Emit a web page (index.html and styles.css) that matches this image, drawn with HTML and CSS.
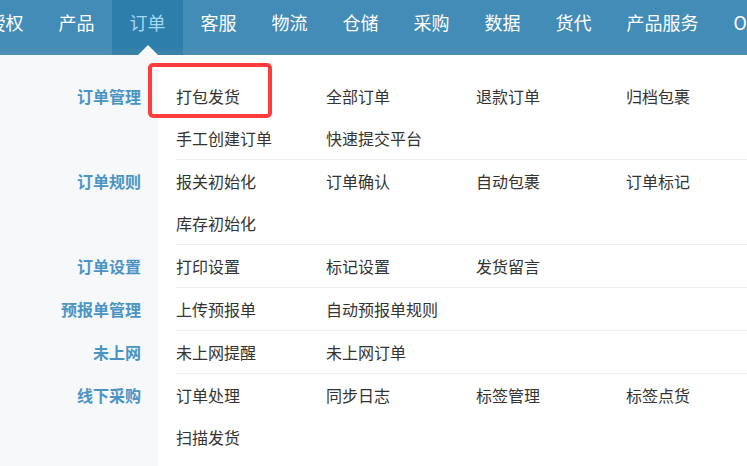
FILE: index.html
```html
<!DOCTYPE html>
<html lang="zh-CN">
<head>
    <meta charset="UTF-8">
    <meta name="viewport" content="width=device-width, initial-scale=1.0">
    <link rel="stylesheet" href="styles.css">
</head>
<body>
    <div class="topnav">
        <ul class="nav-list">
            <li class="nav-item">授权</li>
            <li class="nav-item">产品</li>
            <li class="nav-item active">订单</li>
            <li class="nav-item">客服</li>
            <li class="nav-item">物流</li>
            <li class="nav-item">仓储</li>
            <li class="nav-item">采购</li>
            <li class="nav-item">数据</li>
            <li class="nav-item">货代</li>
            <li class="nav-item">产品服务</li>
            <li class="nav-item">OA</li>
        </ul>
    </div>

    <div class="dropdown">
        <div class="group">
            <div class="group-title">订单管理</div>
            <div class="links">
                <a class="link">打包发货</a>
                <a class="link">全部订单</a>
                <a class="link">退款订单</a>
                <a class="link">归档包裹</a>
                <a class="link">手工创建订单</a>
                <a class="link">快速提交平台</a>
            </div>
        </div>
        <div class="group">
            <div class="group-title">订单规则</div>
            <div class="links">
                <a class="link">报关初始化</a>
                <a class="link">订单确认</a>
                <a class="link">自动包裹</a>
                <a class="link">订单标记</a>
                <a class="link">库存初始化</a>
            </div>
        </div>
        <div class="group">
            <div class="group-title">订单设置</div>
            <div class="links">
                <a class="link">打印设置</a>
                <a class="link">标记设置</a>
                <a class="link">发货留言</a>
            </div>
        </div>
        <div class="group">
            <div class="group-title">预报单管理</div>
            <div class="links">
                <a class="link">上传预报单</a>
                <a class="link">自动预报单规则</a>
            </div>
        </div>
        <div class="group">
            <div class="group-title">未上网</div>
            <div class="links">
                <a class="link">未上网提醒</a>
                <a class="link">未上网订单</a>
            </div>
        </div>
        <div class="group last">
            <div class="group-title">线下采购</div>
            <div class="links">
                <a class="link">订单处理</a>
                <a class="link">同步日志</a>
                <a class="link">标签管理</a>
                <a class="link">标签点货</a>
                <a class="link">扫描发货</a>
            </div>
        </div>

        <div class="highlight"></div>
    </div>
</body>
</html>
```

FILE: styles.css
```css
* {
    box-sizing: border-box;
}

body {
    margin: 0;
    font-family: "Microsoft YaHei", "Noto Sans CJK SC", "Noto Sans", sans-serif;
    background-color: #fff;
    overflow: hidden;
}

.topnav {
    height: 55px;
    background: linear-gradient(to bottom, #438cb7 0, #438cb7 46px, #4f8fb3 55px);
    overflow: hidden;
}

.nav-list {
    display: flex;
    margin: 0 0 0 -30px;
    padding: 0;
    list-style: none;
    white-space: nowrap;
}

.nav-item {
    position: relative;
    height: 55px;
    padding: 0 17.5px;
    line-height: 44px;
    font-size: 18px;
    color: #fff;
}

.nav-item.active {
    background: linear-gradient(to bottom, #2e7eab 0, #2e7eab 46px, #3c82a9 55px);
    color: #a3d8f3;
}

.nav-item.active::after {
    content: "";
    position: absolute;
    left: 50%;
    bottom: 0;
    margin-left: -10px;
    border-left: 10px solid transparent;
    border-right: 10px solid transparent;
    border-bottom: 10px solid #f6f8fa;
}

.dropdown {
    position: relative;
    padding-top: 20px;
    background: linear-gradient(to right, #f6f8fa 0, #f6f8fa 158px, #fff 158px);
    min-height: 411px;
}

.group {
    display: flex;
}

.group-title {
    flex: none;
    width: 158px;
    padding-right: 17px;
    text-align: right;
    font-size: 16px;
    font-weight: bold;
    line-height: 42px;
    color: #4a94c4;
}

.links {
    flex: 1;
    min-width: 0;
    display: grid;
    grid-template-columns: repeat(4, 150px);
    margin-left: 18px;
    border-bottom: 1px solid #eee;
}

.group.last .links {
    border-bottom: none;
}

.link {
    height: 42px;
    line-height: 42px;
    font-size: 16px;
    color: #333;
    white-space: nowrap;
}

.highlight {
    position: absolute;
    left: 148px;
    top: 8px;
    width: 124px;
    height: 55px;
    border: 4px solid #ff3b3b;
    border-radius: 5px;
}
```
